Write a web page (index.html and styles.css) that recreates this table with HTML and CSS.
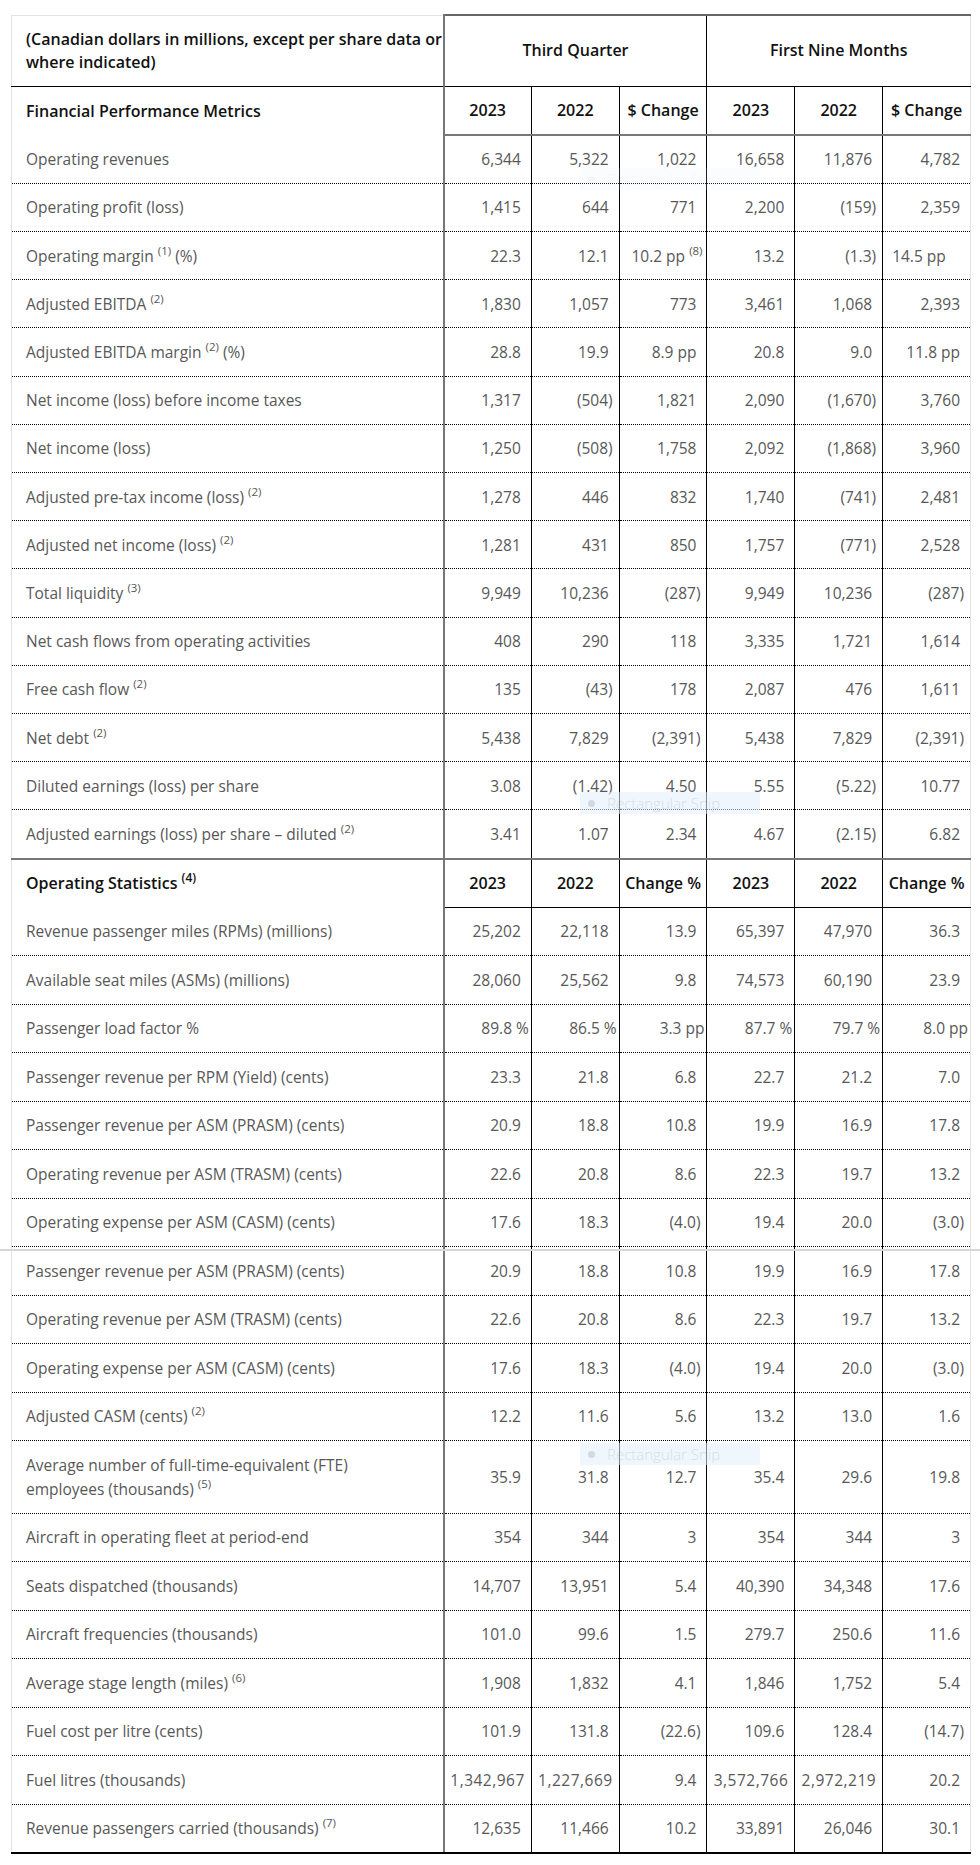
FILE: index.html
```html
<!DOCTYPE html>
<html lang="en">
<head>
<meta charset="utf-8">
<title>Financial Performance</title>
<link rel="stylesheet" href="styles.css">
</head>
<body>
<div class="page">
<table class="fin">
<colgroup>
<col class="c-lab"><col class="c-n"><col class="c-n"><col class="c-n"><col class="c-n"><col class="c-n"><col class="c-n">
</colgroup>
<thead>
<tr class="hd1">
<th class="corner">(Canadian dollars in millions, except per share data or<br>where indicated)</th>
<th class="grp" colspan="3">Third Quarter</th>
<th class="grp last" colspan="3">First Nine Months</th>
</tr>
</thead>
<tbody class="fpm">
<tr class="sec">
<th class="slab">Financial Performance Metrics</th>
<th class="yr">2023</th><th class="yr">2022</th><th class="yr">$ Change</th><th class="yr">2023</th><th class="yr">2022</th><th class="yr last">$ Change</th>
</tr>
<tr><td class="lab">Operating revenues</td><td class="n">6,344</td><td class="n">5,322</td><td class="n">1,022</td><td class="n">16,658</td><td class="n">11,876</td><td class="n last">4,782</td></tr>
<tr><td class="lab">Operating profit (loss)</td><td class="n">1,415</td><td class="n">644</td><td class="n">771</td><td class="n">2,200</td><td class="n p">(159)</td><td class="n last">2,359</td></tr>
<tr><td class="lab">Operating margin <sup>(1)</sup> (%)</td><td class="n">22.3</td><td class="n">12.1</td><td class="n pp">10.2 pp <sup>(8)</sup></td><td class="n">13.2</td><td class="n p">(1.3)</td><td class="n last lft">14.5 pp</td></tr>
<tr><td class="lab">Adjusted EBITDA <sup>(2)</sup></td><td class="n">1,830</td><td class="n">1,057</td><td class="n">773</td><td class="n">3,461</td><td class="n">1,068</td><td class="n last">2,393</td></tr>
<tr><td class="lab">Adjusted EBITDA margin <sup>(2)</sup> (%)</td><td class="n">28.8</td><td class="n">19.9</td><td class="n">8.9 pp</td><td class="n">20.8</td><td class="n">9.0</td><td class="n last">11.8 pp</td></tr>
<tr><td class="lab">Net income (loss) before income taxes</td><td class="n">1,317</td><td class="n p">(504)</td><td class="n">1,821</td><td class="n">2,090</td><td class="n p">(1,670)</td><td class="n last">3,760</td></tr>
<tr><td class="lab">Net income (loss)</td><td class="n">1,250</td><td class="n p">(508)</td><td class="n">1,758</td><td class="n">2,092</td><td class="n p">(1,868)</td><td class="n last">3,960</td></tr>
<tr><td class="lab">Adjusted pre-tax income (loss) <sup>(2)</sup></td><td class="n">1,278</td><td class="n">446</td><td class="n">832</td><td class="n">1,740</td><td class="n p">(741)</td><td class="n last">2,481</td></tr>
<tr><td class="lab">Adjusted net income (loss) <sup>(2)</sup></td><td class="n">1,281</td><td class="n">431</td><td class="n">850</td><td class="n">1,757</td><td class="n p">(771)</td><td class="n last">2,528</td></tr>
<tr><td class="lab">Total liquidity <sup>(3)</sup></td><td class="n">9,949</td><td class="n">10,236</td><td class="n p">(287)</td><td class="n">9,949</td><td class="n">10,236</td><td class="n last p">(287)</td></tr>
<tr><td class="lab">Net cash flows from operating activities</td><td class="n">408</td><td class="n">290</td><td class="n">118</td><td class="n">3,335</td><td class="n">1,721</td><td class="n last">1,614</td></tr>
<tr><td class="lab">Free cash flow <sup>(2)</sup></td><td class="n">135</td><td class="n p">(43)</td><td class="n">178</td><td class="n">2,087</td><td class="n">476</td><td class="n last">1,611</td></tr>
<tr><td class="lab">Net debt <sup>(2)</sup></td><td class="n">5,438</td><td class="n">7,829</td><td class="n p">(2,391)</td><td class="n">5,438</td><td class="n">7,829</td><td class="n last p">(2,391)</td></tr>
<tr><td class="lab">Diluted earnings (loss) per share</td><td class="n">3.08</td><td class="n p">(1.42)</td><td class="n">4.50</td><td class="n">5.55</td><td class="n p">(5.22)</td><td class="n last">10.77</td></tr>
<tr class="endsec"><td class="lab">Adjusted earnings (loss) per share – diluted <sup>(2)</sup></td><td class="n">3.41</td><td class="n">1.07</td><td class="n">2.34</td><td class="n">4.67</td><td class="n p">(2.15)</td><td class="n last">6.82</td></tr>
</tbody>
<tbody class="ops">
<tr class="sec sec2">
<th class="slab">Operating Statistics <sup>(4)</sup></th>
<th class="yr">2023</th><th class="yr">2022</th><th class="yr">Change %</th><th class="yr">2023</th><th class="yr">2022</th><th class="yr last">Change %</th>
</tr>
<tr><td class="lab">Revenue passenger miles (RPMs) (millions)</td><td class="n">25,202</td><td class="n">22,118</td><td class="n">13.9</td><td class="n">65,397</td><td class="n">47,970</td><td class="n last">36.3</td></tr>
<tr><td class="lab">Available seat miles (ASMs) (millions)</td><td class="n">28,060</td><td class="n">25,562</td><td class="n">9.8</td><td class="n">74,573</td><td class="n">60,190</td><td class="n last">23.9</td></tr>
<tr><td class="lab">Passenger load factor %</td><td class="n t">89.8 %</td><td class="n t">86.5 %</td><td class="n t">3.3 pp</td><td class="n t">87.7 %</td><td class="n t">79.7 %</td><td class="n last t">8.0 pp</td></tr>
<tr><td class="lab">Passenger revenue per RPM (Yield) (cents)</td><td class="n">23.3</td><td class="n">21.8</td><td class="n">6.8</td><td class="n">22.7</td><td class="n">21.2</td><td class="n last">7.0</td></tr>
<tr><td class="lab">Passenger revenue per ASM (PRASM) (cents)</td><td class="n">20.9</td><td class="n">18.8</td><td class="n">10.8</td><td class="n">19.9</td><td class="n">16.9</td><td class="n last">17.8</td></tr>
<tr><td class="lab">Operating revenue per ASM (TRASM) (cents)</td><td class="n">22.6</td><td class="n">20.8</td><td class="n">8.6</td><td class="n">22.3</td><td class="n">19.7</td><td class="n last">13.2</td></tr>
<tr><td class="lab">Operating expense per ASM (CASM) (cents)</td><td class="n">17.6</td><td class="n">18.3</td><td class="n p">(4.0)</td><td class="n">19.4</td><td class="n">20.0</td><td class="n last p">(3.0)</td></tr>
<tr><td class="lab">Passenger revenue per ASM (PRASM) (cents)</td><td class="n">20.9</td><td class="n">18.8</td><td class="n">10.8</td><td class="n">19.9</td><td class="n">16.9</td><td class="n last">17.8</td></tr>
<tr><td class="lab">Operating revenue per ASM (TRASM) (cents)</td><td class="n">22.6</td><td class="n">20.8</td><td class="n">8.6</td><td class="n">22.3</td><td class="n">19.7</td><td class="n last">13.2</td></tr>
<tr><td class="lab">Operating expense per ASM (CASM) (cents)</td><td class="n">17.6</td><td class="n">18.3</td><td class="n p">(4.0)</td><td class="n">19.4</td><td class="n">20.0</td><td class="n last p">(3.0)</td></tr>
<tr><td class="lab">Adjusted CASM (cents) <sup>(2)</sup></td><td class="n">12.2</td><td class="n">11.6</td><td class="n">5.6</td><td class="n">13.2</td><td class="n">13.0</td><td class="n last">1.6</td></tr>
<tr><td class="lab">Average number of full-time-equivalent (FTE)<br>employees (thousands) <sup>(5)</sup></td><td class="n">35.9</td><td class="n">31.8</td><td class="n">12.7</td><td class="n">35.4</td><td class="n">29.6</td><td class="n last">19.8</td></tr>
<tr><td class="lab">Aircraft in operating fleet at period-end</td><td class="n">354</td><td class="n">344</td><td class="n">3</td><td class="n">354</td><td class="n">344</td><td class="n last">3</td></tr>
<tr><td class="lab">Seats dispatched (thousands)</td><td class="n">14,707</td><td class="n">13,951</td><td class="n">5.4</td><td class="n">40,390</td><td class="n">34,348</td><td class="n last">17.6</td></tr>
<tr><td class="lab">Aircraft frequencies (thousands)</td><td class="n">101.0</td><td class="n">99.6</td><td class="n">1.5</td><td class="n">279.7</td><td class="n">250.6</td><td class="n last">11.6</td></tr>
<tr><td class="lab">Average stage length (miles) <sup>(6)</sup></td><td class="n">1,908</td><td class="n">1,832</td><td class="n">4.1</td><td class="n">1,846</td><td class="n">1,752</td><td class="n last">5.4</td></tr>
<tr><td class="lab">Fuel cost per litre (cents)</td><td class="n">101.9</td><td class="n">131.8</td><td class="n p">(22.6)</td><td class="n">109.6</td><td class="n">128.4</td><td class="n last p">(14.7)</td></tr>
<tr><td class="lab">Fuel litres (thousands)</td><td class="n w">1,342,967</td><td class="n w">1,227,669</td><td class="n">9.4</td><td class="n w">3,572,766</td><td class="n w">2,972,219</td><td class="n last">20.2</td></tr>
<tr class="lastrow"><td class="lab">Revenue passengers carried (thousands) <sup>(7)</sup></td><td class="n">12,635</td><td class="n">11,466</td><td class="n">10.2</td><td class="n">33,891</td><td class="n">26,046</td><td class="n last">30.1</td></tr>
</tbody>
</table>

<div class="snip snip-a"><span class="dot"></span>Rectangular Snip</div>
<div class="snip snip-b"><span class="dot"></span>Rectangular Snip</div>
<div class="snip snip-c"><span class="dot"></span>Rectangular Snip</div>
<div class="seam"></div>
</div>
</body>
</html>
```

FILE: styles.css
```css
html, body {
  margin: 0;
  padding: 0;
  background: #ffffff;
}

.page {
  position: relative;
  padding: 14px 0 20px 11px;
  font-family: "Open Sans", "Noto Sans", "Liberation Sans", sans-serif;
}

.fin {
  width: 959px;
  table-layout: fixed;
  border-collapse: collapse;
  font-size: 15.5px;
  font-weight: 400;
  line-height: 24px;
  color: #585858;
}

.c-lab { width: 432px; }
.c-n { width: 87.83px; }

.fin th, .fin td {
  padding: 11.6px 10px;
  vertical-align: middle;
}

.ops td {
  padding-top: 11.75px;
  padding-bottom: 11.75px;
}

.fin th {
  font-size: 16px;
  font-weight: 600;
  color: #111;
}

/* header row 1 */
.hd1 th {
  padding-top: 12px;
  padding-bottom: 12px;
  line-height: 23px;
  border-bottom: 1px solid #000;
}
.corner {
  text-align: left;
  white-space: nowrap;
  padding-left: 14px !important;
  padding-right: 2px !important;
  border-top: 1px solid #e3e3e3;
  border-left: 1px solid #e3e3e3;
  border-right: 2px solid #777;
}
.grp {
  text-align: center;
  border-top: 2px solid #666;
  border-right: 1px solid #000;
}
.grp.last { border-right: 1px solid #e3e3e3; }

/* section header rows */
.sec th {
  padding-top: 11.6px;
  padding-bottom: 11.6px;
}
.slab {
  text-align: left;
  padding-left: 14px !important;
  border-left: 1px solid #e3e3e3;
  border-right: 2px solid #777;
}
.yr {
  text-align: center;
  white-space: nowrap;
  padding-left: 1px !important;
  padding-right: 1px !important;
  border-right: 1px solid #000;
  border-bottom: 2px solid #777;
}
.sec2 .yr { border-bottom: 1px solid #000; }
.yr.last { border-right: 1px solid #e3e3e3; }

/* data rows */
.fin td {
  border-bottom: 1px dotted #000;
}
.lab {
  text-align: left;
  padding-left: 14px !important;
  padding-right: 4px !important;
  border-left: 1px solid #e3e3e3;
  border-right: 2px solid #777;
}
.n {
  text-align: right;
  white-space: nowrap;
  border-right: 1px solid #000;
}
.n.last { border-right: 1px solid #e3e3e3; }
.n.p { padding-right: 6px; }
.n.t { padding-right: 2px; padding-left: 0; }
.n.w { padding-left: 0; padding-right: 6px; letter-spacing: 0.5px; }
.n.pp { padding-left: 2px; padding-right: 4px; }
.n.lft { text-align: left; padding-left: 9px; }

.endsec td { border-bottom: 2px solid #777; }
.lastrow td { border-bottom: 2px solid #000; }

sup {
  font-size: 11.5px;
  line-height: 0;
  vertical-align: 7px;
}
th sup { font-size: 12px; }

/* faint snipping-tool ghosts lying over the table */
.snip {
  position: absolute;
  left: 580px;
  width: 180px;
  height: 22px;
  display: flex;
  align-items: center;
  gap: 12px;
  padding-left: 8px;
  box-sizing: border-box;
  background: rgba(225, 238, 252, 0.55);
  color: rgba(160, 170, 180, 0.35);
  font-size: 15px;
  font-weight: 300;
}
.snip .dot {
  width: 7px;
  height: 7px;
  border-radius: 50%;
  background: rgba(170, 175, 185, 0.4);
}
.snip-a { top: 792px; }
.snip-b { top: 1443px; }
.snip-c { top: 168px; opacity: 0.25; }

.seam {
  position: absolute;
  left: 0;
  right: 0;
  top: 1249px;
  height: 2px;
  background: #d6d6d6;
}
```
